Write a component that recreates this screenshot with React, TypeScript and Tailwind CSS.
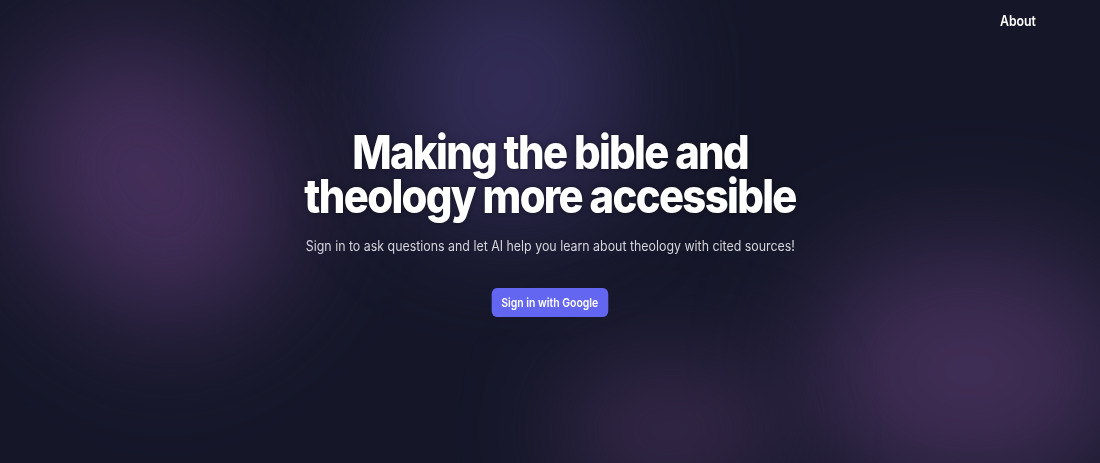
export default function App() {
  return (
    <div
      className="relative min-h-[463px] w-full overflow-hidden bg-[#151729] text-white"
      style={{ fontFamily: 'Inter, "Noto Sans", sans-serif' }}
    >
      {/* blurred colour blobs */}
      <div className="pointer-events-none absolute inset-0">
        <div className="absolute left-[30px] top-[30px] h-[300px] w-[240px] rotate-[-40deg] rounded-full bg-[#4a3260] opacity-90 blur-[60px]" />
        <div className="absolute left-[390px] top-[-40px] h-[260px] w-[240px] rounded-full bg-[#3a3262] opacity-85 blur-[60px]" />
        <div className="absolute left-[810px] top-[250px] h-[240px] w-[320px] rounded-full bg-[#48325e] opacity-85 blur-[60px]" />
        <div className="absolute left-[560px] top-[360px] h-[140px] w-[220px] rounded-full bg-[#3d2c50] opacity-80 blur-[50px]" />
      </div>

      <header className="relative flex justify-end px-16 pt-[11px]">
        <a className="origin-right scale-x-[0.88] text-sm font-semibold text-white">About</a>
      </header>

      <main className="relative flex flex-col items-center pt-[99px] text-center">
        <h1 className="scale-x-[0.89] text-[47px] font-extrabold leading-[44px] tracking-[-0.04em] [text-shadow:0_0_6px_rgba(0,0,0,0.45)]">
          Making the bible and
          <br />
          theology more accessible
        </h1>
        <p className="mt-[18px] scale-x-[0.885] text-sm text-[#d4d4dc]">
          Sign in to ask questions and let AI help you learn about theology with cited sources!
        </p>
        <button className="mt-[32px] h-[29px] scale-x-[0.87] rounded-md bg-[#6366f1] px-[11px] text-xs font-semibold text-white">
          Sign in with Google
        </button>
      </main>
    </div>
  );
}
